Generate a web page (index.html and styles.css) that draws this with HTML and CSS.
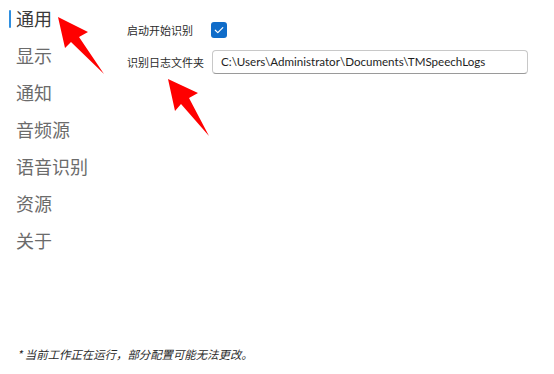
FILE: index.html
```html
<!DOCTYPE html>
<html>
<head>
  <meta charset="utf-8">
  <link rel="stylesheet" href="styles.css">
</head>
<body>
  <div class="page">
    <div class="main">
      <div class="nav">
        <div class="nav-item active">通用</div>
        <div class="nav-item">显示</div>
        <div class="nav-item">通知</div>
        <div class="nav-item">音频源</div>
        <div class="nav-item">语音识别</div>
        <div class="nav-item">资源</div>
        <div class="nav-item">关于</div>
      </div>
      <div class="settings">
        <div class="row row-check">
          <span class="label">启动开始识别</span>
          <span class="checkbox">
            <svg width="16" height="16" viewBox="0 0 16 16"><path d="M4.3 8.2 L6.8 10.6 L11.8 5.6" fill="none" stroke="#fff" stroke-width="1.2" stroke-linecap="round" stroke-linejoin="round"/></svg>
          </span>
        </div>
        <div class="row row-input">
          <span class="label">识别日志文件夹</span>
          <div class="textbox">C:\Users\Administrator\Documents\TMSpeechLogs</div>
        </div>
      </div>
    </div>
    <div class="note">* 当前工作正在运行，部分配置可能无法更改。</div>
  </div>

  <svg class="marks" width="554" height="374" viewBox="0 0 554 374">
    <polygon points="58,17 88,32 79,37 104,74 71,42 65,48" fill="#ff0000"/>
    <polygon points="168,79 198,93 189,98 209,136 181,104 175,111" fill="#ff0000"/>
  </svg>
</body>
</html>
```

FILE: styles.css
```css
body {
  margin: 0;
  padding: 0;
  background-color: #ffffff;
  font-family: "Noto Sans", "Noto Sans CJK SC", sans-serif;
  color: #1b1b1b;
}

.page {
  height: 374px;
  display: flex;
  flex-direction: column;
}

.main {
  display: flex;
  flex: 1;
}

.nav {
  width: 111px;
  padding-top: 0;
}

.nav-item {
  position: relative;
  height: 37px;
  line-height: 37px;
  padding-left: 16px;
  font-size: 18px;
  font-family: "Noto Sans CJK SC", sans-serif;
  color: #6b6b6b;
}

.nav-item.active {
  color: #3a3a3a;
}

.nav-item.active::before {
  content: "";
  position: absolute;
  left: 9px;
  top: 10px;
  width: 2px;
  height: 18px;
  border-radius: 1px;
  background-color: #2f8fe0;
}

.settings {
  padding-top: 20px;
  padding-left: 16px;
  display: flex;
  flex-direction: column;
  gap: 10px;
}

.row {
  display: flex;
  align-items: center;
}

.row-check {
  height: 20px;
}

.row-input {
  height: 24px;
}

.label {
  width: 84px;
  font-size: 11px;
  font-family: "Noto Sans CJK SC", sans-serif;
  color: #2b2b2b;
}

.checkbox {
  width: 16px;
  height: 16px;
  border-radius: 3px;
  background-color: #0f6cc9;
  display: flex;
}

.textbox {
  margin-left: 1px;
  width: 306px;
  height: 22px;
  line-height: 22px;
  padding-left: 8px;
  border: 1px solid #c8c8c8;
  border-bottom-color: #9a9a9a;
  border-radius: 4px;
  font-family: "Lato", sans-serif;
  font-size: 11.6px;
  color: #1e1e1e;
}

.note {
  padding: 0 0 12px 17px;
  font-size: 11.4px;
  font-style: italic;
  font-family: "Noto Sans CJK SC", sans-serif;
  color: #2a2a2a;
}

.marks {
  position: absolute;
  left: 0;
  top: 0;
  pointer-events: none;
}
```
